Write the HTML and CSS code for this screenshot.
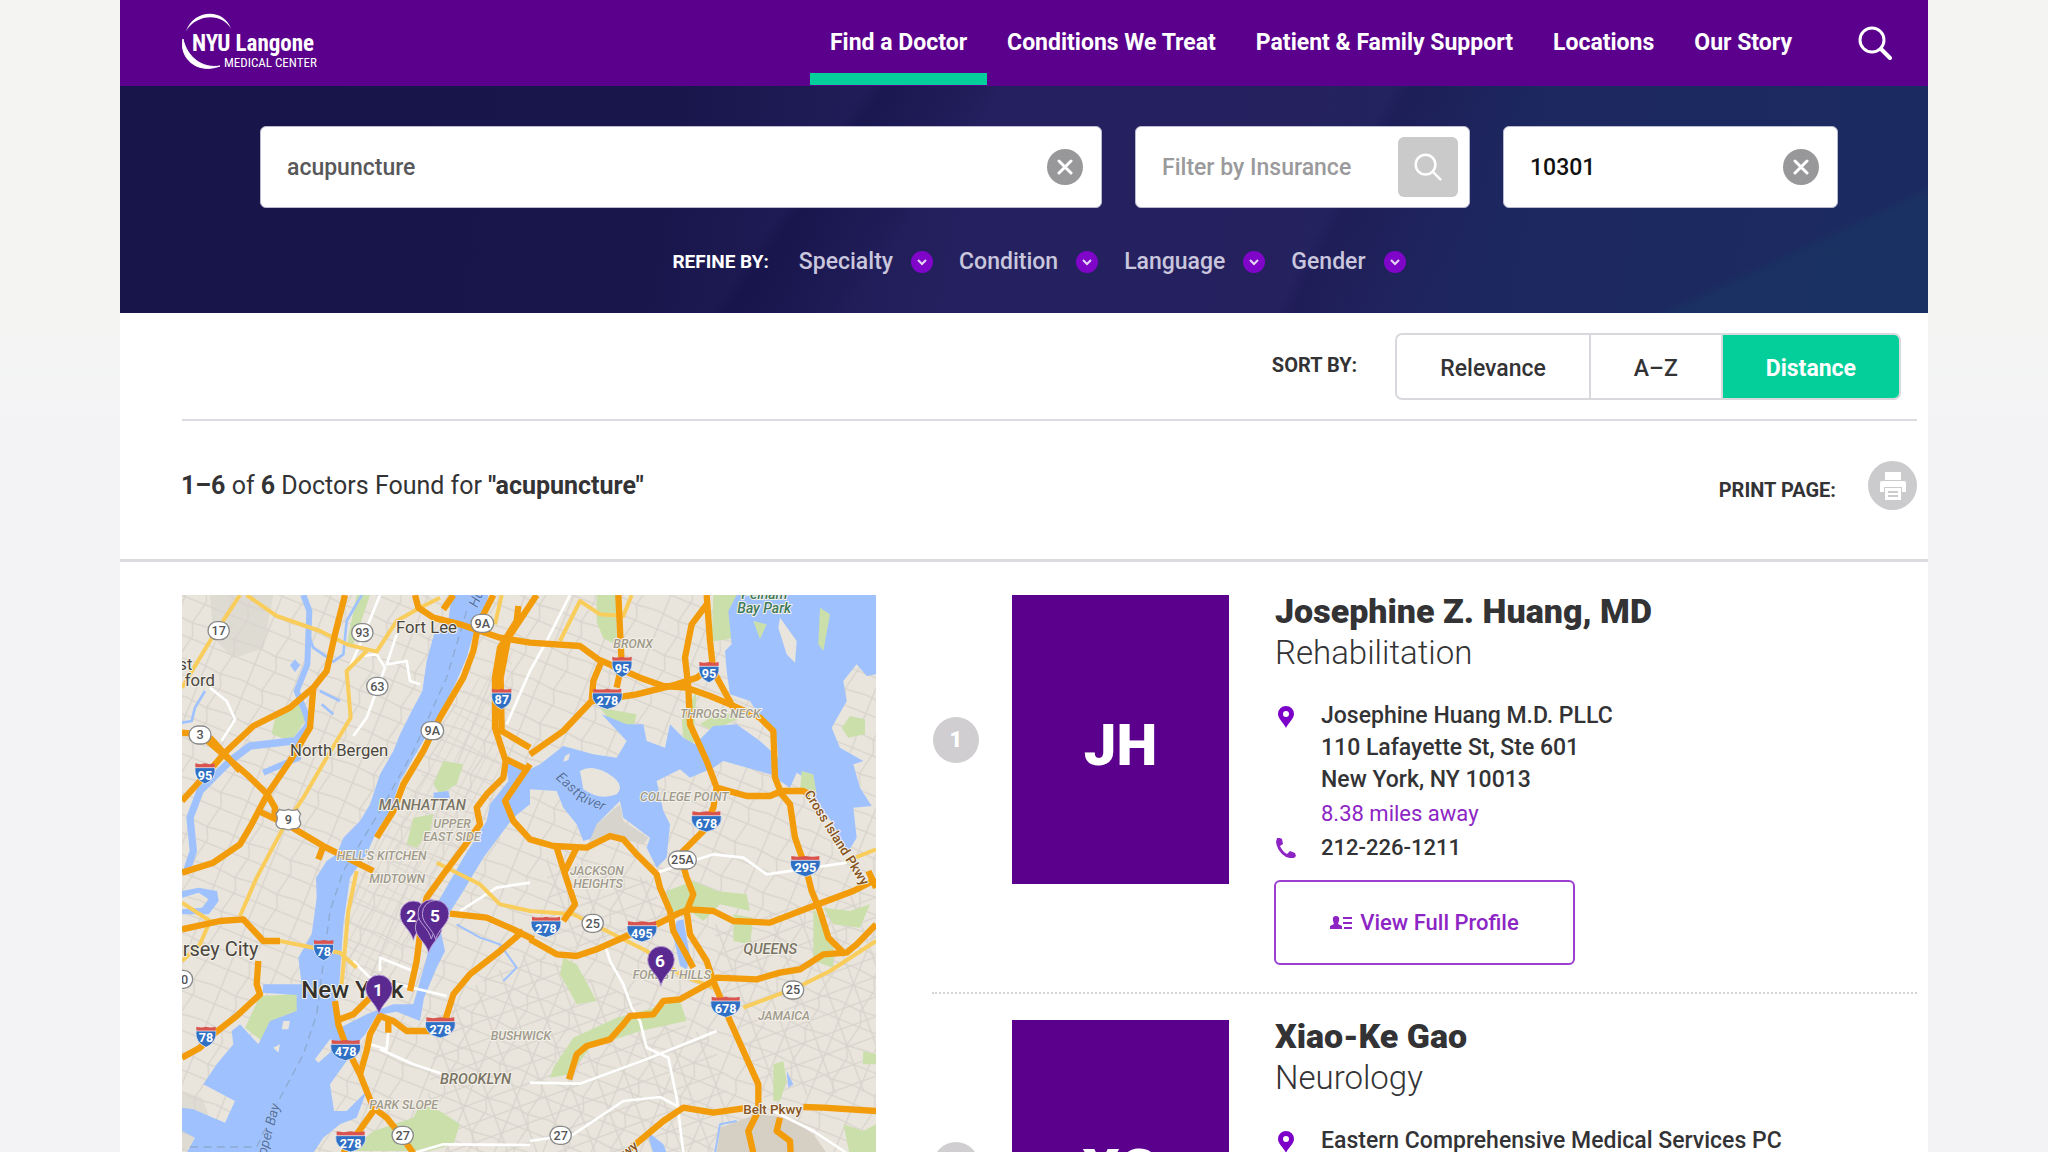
FILE: index.html
```html
<!DOCTYPE html>
<html lang="en">
<head>
<meta charset="utf-8">
<title>Find a Doctor | NYU Langone Medical Center</title>
<link rel="stylesheet" href="styles.css">
</head>
<body>
<div class="page">
  <header class="site-header">
    <a class="logo" href="#" aria-label="NYU Langone Medical Center">
      <svg viewBox="0 0 140 60" width="140" height="60" aria-hidden="true">
        <path d="M4 18C12-4 42-5 49 16C41 0 15 0 4 18Z" fill="#fff"/>
        <path d="M1 26C-3 44 14 62 38 53C20 56 5 44 1 26Z" fill="#fff" stroke="#fff"/>
        <text class="logo-name" x="10" y="38">NYU Langone</text>
        <text class="logo-sub" x="42" y="54">MEDICAL CENTER</text>
      </svg>
    </a>
    <nav class="main-nav">
      <a class="nav-link active" href="#">Find a Doctor</a>
      <a class="nav-link" href="#">Conditions We Treat</a>
      <a class="nav-link" href="#">Patient &amp; Family Support</a>
      <a class="nav-link" href="#">Locations</a>
      <a class="nav-link" href="#">Our Story</a>
    </nav>
    <button class="header-search" type="button" aria-label="Search">
      <svg viewBox="0 0 34 34" width="34" height="34" fill="none" stroke="#fff" stroke-width="3" stroke-linecap="round"><circle cx="14" cy="14" r="12"/><path d="M23 23l9 9" stroke-width="4"/></svg>
    </button>
  </header>

  <form class="search-band">
    <div class="fields">
      <div class="field">
        <input class="field-input" type="text" value="acupuncture" aria-label="Search doctors">
        <button class="clear" type="button" aria-label="Clear search"><svg viewBox="0 0 16 16" width="16" height="16"><path d="M2 2l12 12M14 2L2 14" stroke="#fff" stroke-width="3" stroke-linecap="round"/></svg></button>
      </div>
      <div class="field field-insurance">
        <input class="field-input" type="text" placeholder="Filter by Insurance" aria-label="Filter by Insurance">
        <button class="field-search" type="button" aria-label="Search insurance"><svg viewBox="0 0 34 34" width="28" height="28" fill="none" stroke="#fff" stroke-width="3" stroke-linecap="round"><circle cx="14" cy="14" r="12"/><path d="M23 23l9 9"/></svg></button>
      </div>
      <div class="field">
        <input class="field-input zip" type="text" value="10301" aria-label="ZIP code">
        <button class="clear" type="button" aria-label="Clear ZIP code"><svg viewBox="0 0 16 16" width="16" height="16"><path d="M2 2l12 12M14 2L2 14" stroke="#fff" stroke-width="3" stroke-linecap="round"/></svg></button>
      </div>
    </div>
    <div class="refine">
      <span class="refine-label">REFINE BY:</span>
      <button class="refine-btn" type="button">Specialty<span class="dot"><svg viewBox="0 0 10 7" width="10" height="7"><path d="M1 1l4 4 4-4" fill="none" stroke="#e5d9f5" stroke-width="2"/></svg></span></button>
      <button class="refine-btn" type="button">Condition<span class="dot"><svg viewBox="0 0 10 7" width="10" height="7"><path d="M1 1l4 4 4-4" fill="none" stroke="#e5d9f5" stroke-width="2"/></svg></span></button>
      <button class="refine-btn" type="button">Language<span class="dot"><svg viewBox="0 0 10 7" width="10" height="7"><path d="M1 1l4 4 4-4" fill="none" stroke="#e5d9f5" stroke-width="2"/></svg></span></button>
      <button class="refine-btn" type="button">Gender<span class="dot"><svg viewBox="0 0 10 7" width="10" height="7"><path d="M1 1l4 4 4-4" fill="none" stroke="#e5d9f5" stroke-width="2"/></svg></span></button>
    </div>
  </form>

  <div class="sort-row">
    <span class="caps-label sort-label">SORT BY:</span>
    <div class="segments">
      <button class="segment" type="button">Relevance</button>
      <button class="segment" type="button">A–Z</button>
      <button class="segment selected" type="button">Distance</button>
    </div>
  </div>

  <div class="summary">
    <p class="count"><b>1–6</b> of <b>6</b> Doctors Found for <b>"acupuncture"</b></p>
    <span class="caps-label print-label">PRINT PAGE:</span>
    <button class="print" type="button" aria-label="Print page">
      <svg viewBox="0 0 26 28" width="26" height="28"><path fill="#fff" d="M5 0h16v8H5zM2 9h22q2 0 2 2v9h-4v-5H4v5H0v-9q0-2 2-2zM5 16h16v12H5z"/><path d="M8 20h10M8 24h10" stroke="#cbcbcd" stroke-width="2"/></svg>
    </button>
  </div>

  <main class="results">
    <svg class="map" viewBox="6 12 2082 1674" preserveAspectRatio="xMinYMin slice" role="img" aria-label="Map of doctors">
      <defs>
        <pattern id="streets" width="135" height="110" patternUnits="userSpaceOnUse" patternTransform="rotate(22)"><path d="M0 10H135M0 68L70 75L135 68M20 0V110M86 0L70 75L86 110" stroke="#d8d4cd" stroke-width="4" fill="none"/></pattern>
        <pattern id="blocks" width="26" height="70" patternUnits="userSpaceOnUse" patternTransform="rotate(28)"><path d="M0 5H26M5 0V70" stroke="#dad6cf" stroke-width="3"/></pattern>
        <pattern id="avenues" width="82" height="56" patternUnits="userSpaceOnUse" patternTransform="rotate(-20)"><path d="M0 10H82M20 0V56" stroke="#d8d4cd" stroke-width="4"/></pattern>
        <symbol id="i2" viewBox="0 0 64 66"><path d="M3 3q14 5 29 0q15 5 29 0v14H3z" fill="#d9534f"/><path d="M2 16H62Q66 50 32 65Q-2 50 2 16Z" fill="#2f6fc4" stroke="#fff" stroke-width="2"/></symbol>
        <symbol id="i3" viewBox="0 0 96 66"><path d="M6 3q21 5 42 0q21 5 42 0v14H6z" fill="#d9534f"/><path d="M3 16H93Q97 54 48 65Q-1 54 3 16Z" fill="#2f6fc4" stroke="#fff" stroke-width="2"/></symbol>
        <symbol id="pin" viewBox="0 0 84 122"><path d="M42 120C34 86 2 74 2 42A40 40 0 0 1 82 42C82 74 50 86 42 120Z" fill="#5b2a91" stroke="#b9a3d3" stroke-width="3"/></symbol>
      </defs>
      <rect x="6" y="12" width="2082" height="1674" fill="#e9e5dc"/>
      <g fill="#dedbd3">
        <path d="M90 12h190l-30 160-90 30-60-60z"/><path d="M6 1500l60 20 60 160H6z"/>
      </g>
      <rect x="6" y="12" width="2082" height="1674" fill="url(#streets)"/>
      <path d="M850 300L1000 180L960 560L880 700L740 1000L560 1200L480 1180L520 880L700 600Z" fill="url(#blocks)"/>
      <path d="M780 1250L1050 1080L1420 1250L1600 1350L1690 1686H720Z" fill="url(#avenues)"/>
      <path d="M1100 800L1400 860L1480 1000L1300 1040L1110 1090ZM1600 1000L2088 900V1500L1750 1520L1630 1200Z" fill="url(#avenues)"/>
      <path d="M1620 1610L1730 1570L1830 1580L1900 1630L1940 1686H1610Z" fill="#d6cfc4"/>
      <g fill="#cbdfab">
        <path d="M530 12h40l-50 150h-20zM365 330l10 60-40 60-60-20 10-50zM790 510l60 10-20 60-50 30-20-30zM700 680l60-10-10 50-40 50-30-10zM240 1215l110-5 5 50-90 40-20 50-50-40z"/>
        <path d="M1250 12h60v150l-40-20-20-50zM1600 12h70l-15 130-60 10zM1260 350l110 20-10 40-70-20zM1550 300l-10 160-30-20-5-60zM1560 400l60-40 60 20-80 40z"/>
        <path d="M1460 900l80-30 70 30 90 10 10 50-90-20-50 50-40-30-60 20zM1660 970l60 10-10 80-50-10zM1930 950l80 10 60-20-30 70-80-10zM1900 950l60 100 0 80-60-20zM1150 1100l40 20 60 110-60 10-50-90zM1120 1430l60-90 130-60 190-50 20 60-140 30-150 50-60 80-60 10z"/>
        <path d="M580 1620l120-40 20-40 60 20 60 40-20 60-70 20h-240zM2050 1380l38 10v30h-40zM1990 1600l60 20 38-20v86h-80zM1780 1420l30-10 10 60-20 60h-20z"/>
      </g>
      <g fill="#9fc2ff">
        <path d="M815 12L805 90L762 130L740 210L727 300L690 370L660 430L640 480L600 550L570 640L540 690L490 740L470 790L440 810L408 860L410 920L395 1030L355 1100L365 1180L250 1180L248 1205L350 1212L350 1260L270 1290L235 1360L180 1300L155 1320L160 1360L110 1420L70 1480L165 1530L135 1595L40 1555L6 1550V1620L45 1640L20 1686H400L430 1640L480 1600L530 1580L560 1500L500 1560L462 1560L450 1480L500 1410L455 1380L415 1415L405 1405L450 1345L520 1370L556 1330L590 1272L650 1262L720 1290L732 1220L770 1130L795 1080L780 1010L850 900L910 800L1000 680L1050 640L1050 595L1130 600L1150 650L1190 700L1210 750L1240 740L1250 700L1320 630L1330 680L1410 740L1400 770L1430 830L1460 800L1470 700L1450 660L1430 570L1500 535L1530 560L1600 530L1630 510L1770 550L1830 590L1850 545L1900 575L1905 620L1960 700L2000 790L2030 740L2020 650L2075 645L2040 590L2020 520L2050 510L1980 470L1955 410L2000 330L1990 270L2030 220L2060 255L2088 250V12H1670L1645 60L1655 160L1635 180L1640 240L1650 310L1710 330L1745 385L1790 450L1795 500L1740 450L1670 400L1600 405L1545 460L1510 440L1470 400L1455 470L1400 450L1390 400L1340 400L1265 370L1340 450L1310 500L1240 490L1150 465L1080 520L1040 540L975 500L985 570L930 640L920 690L850 800L770 940L740 1100L700 1240L640 1240L560 1270L480 1310L465 1240L478 1180L490 1000L510 860L560 790L590 720L630 660L660 570L730 450L790 350L830 270L860 200L880 130L915 60L925 12Z"/>
        <path d="M6 900l50-10 55 10 5 30-30 40H6v-15l60-5 20-25-30-20-50 15zM345 205l15 18-15 20-15-20zM760 605l45-5 5 20-48 5zM1490 990l20-5 20 110-10 40-20-10-20-90zM1820 1440l20 40-15 10zM1400 1620l50 40 10 26h-40z"/>
      </g>
      <path d="M1720 90l40 10-20 45zM1920 50l30 20-20 110-15-20zM1865 540l35 10 10 60-50-10zM2010 375l45 10v45l-50 10-20-30z" fill="#cbdfab"/>
      <g fill="none" stroke="#9fc2ff" stroke-linejoin="round">
        <path d="M370 12L388 60L382 220L350 300L378 370L385 400L340 455L355 500L250 545" stroke-width="18"/>
        <path d="M340 450L210 465L150 510L60 600L30 680L40 780L20 840" stroke-width="22"/>
        <path d="M545 12L500 90L490 190L460 212L400 170L385 130M75 300L45 350L35 390L6 395M425 340L460 370M420 300L480 330" stroke-width="8"/>
        <path d="M830 1000L900 1040L960 1060L1010 1130L970 1170M1670 1590L1620 1600L1605 1686" stroke-width="6"/>
      </g>
      <g fill="#e9e5dc">
        <path d="M1200 540Q1230 520 1280 545Q1340 580 1310 610Q1260 630 1210 595ZM1155 495l15-8-5 20-15 5zM1800 80L1850 150L1845 215L1820 190L1795 110ZM310 1290l20 0-5 25-20 0zM280 1370l20-10-5 25z"/>
      </g>
      <path d="M1250 700L1320 640L1330 690L1405 740L1390 760L1290 735L1220 770Z" fill="#d7d4cd"/>
      <g fill="none" stroke="#8ea9cf" stroke-width="4" stroke-dasharray="24 16">
        <path d="M860 60L800 260L700 480L600 660L490 840L450 960L410 1270L370 1390L290 1540L230 1668L20 1668"/>
      </g>
      <g fill="none" stroke="#fff" stroke-width="8" stroke-linejoin="round">
        <path d="M1170 12L1100 150L1050 240L980 400M600 12L540 160L500 250M650 130L620 220L680 210L690 270L720 280M540 195L590 190L615 230L560 380L520 435M90 290L140 330L165 385L125 450"/>
        <path d="M840 960L950 890L1050 875M600 1140L600 1100L700 1140M520 1110L570 1160L800 1215M625 1320L620 1375L570 1360M600 1375L700 1420L790 1450M1275 1060L1290 1110L1330 1180L1355 1250L1380 1290L1400 1370L1465 1400L1490 1520L1510 1686M1050 1475L1200 1478L1400 1405L1610 1320M1050 1650L1180 1630L1330 1530L1440 1518L1500 1550M1780 1560L1900 1620L2000 1686M700 1686L790 1660L1050 1662M1430 845L1600 790L1690 800L1760 850L1900 830L2000 815"/>
      </g>
      <g fill="none" stroke="#f9cd5c" stroke-width="12" stroke-linejoin="round">
        <path d="M180 12L90 150L6 290M200 12L290 75L420 120L500 160L590 182L650 90L720 50L780 20M560 180L500 240L512 380L440 500L370 620L310 710L230 860L180 975M530 840L505 960L485 1180M300 1050L400 1070L480 1085L530 1130M6 935L90 990L60 1060L6 1110"/>
        <path d="M770 815L900 880L960 940L1050 960L1180 970L1300 1030L1400 1080L1500 1150L1600 1190M1690 1250L1850 1190L1950 1140L2088 1050M1140 150L1200 30L1260 70L1330 75L1355 12M965 12L945 100M2000 810L2088 775"/>
      </g>
      <g fill="none" stroke="#f29c0b" stroke-width="19" stroke-linejoin="round">
        <path d="M495 12L465 130L440 240L400 290L330 350L220 405L140 480L60 570L6 630M400 290L390 410L330 510L262 610L215 700L180 760L100 815L6 845M6 425L60 430L130 490L200 550L262 610L285 650L282 690M90 440L180 540M235 660L320 700L430 765L480 790L580 840M430 765L415 805"/>
        <path d="M705 12L715 50L760 80L840 100L960 140L1050 155L1200 165L1255 205L1300 225L1380 260L1450 285L1520 290L1590 315L1650 340L1740 380L1780 420L1785 560L1805 610L1830 640L1845 740L1880 840L1895 900L1920 960L1945 1040L1995 1090M820 12L790 55M940 12L895 100L880 180L850 260L780 380L730 480L670 580L640 660L590 740"/>
        <path d="M1015 45L1010 90L960 170L945 260L945 410L977 510L970 560L920 610L890 650L900 700L850 770L790 850L740 920L725 990L710 1110L690 1200M1070 12L985 140L962 260L965 420L1050 470M980 505L1040 535M1050 520L975 630L1000 690L1050 745L1120 765L1220 770L1290 735L1330 745L1370 790L1430 850L1440 890L1470 960L1480 1020L1540 1130"/>
        <path d="M1050 490L1150 420L1235 330L1240 270L1265 210M1315 12L1325 220L1310 290M1240 330L1370 310L1490 280L1550 260L1590 230M1580 12L1590 150L1600 240L1660 350M1580 40L1535 100L1515 200L1525 290L1530 400L1580 510L1610 590L1600 650L1570 720L1500 790L1520 860L1540 910L1520 960L1530 1030L1580 1110L1600 1170L1650 1290L1735 1480L1735 1560L1705 1620L1720 1686M1610 590L1700 615L1770 615L1805 600L1870 600L1890 610"/>
        <path d="M1050 1045L1130 1090L1190 1095L1250 1075L1340 1035L1430 1000L1500 965L1530 955L1600 960L1660 990L1770 995L1900 945L2020 900L2088 865M2065 840L2088 890M1130 770L1155 850L1185 940L1150 990M1190 770L1155 840M810 968L920 980L1000 1015L1060 1045M1030 1020L960 1080L870 1150L820 1210L795 1290M750 1320L680 1320L640 1290L600 1275L570 1330L560 1380L540 1450M625 1290V1325"/>
        <path d="M465 1230L475 1300L500 1370L540 1450L580 1550L620 1580L660 1630L700 1686M580 1560L530 1630L490 1686M480 1285L520 1270L570 1220M1167 1465L1190 1390L1220 1365L1290 1345L1330 1300L1350 1275L1420 1270L1450 1230L1500 1225L1590 1175L1610 1160L1730 1165L1800 1145L1860 1135L1930 1090L2000 1085L2030 1060L2088 1000M1330 1690L1450 1590L1510 1550L1600 1565L1690 1552M1870 1548L1930 1550L2088 1560M1800 1580L1790 1620L1830 1650L1832 1686M6 1015L120 990L190 985L250 1050L300 1050M235 1110L230 1180L240 1210L170 1275L100 1330L60 1370L6 1400"/>
      </g>

      <g class="map-area">
        <text x="1684" y="24" class="park">Pelham</text><text x="1672" y="66" class="park">Bay Park</text>
        <text x="1300" y="171">BRONX</text><text x="1500" y="380">THROGS NECK</text><text x="1380" y="630">COLLEGE POINT</text>
        <text x="760" y="710">UPPER</text><text x="730" y="750">EAST SIDE</text><text x="470" y="808">HELL'S KITCHEN</text><text x="568" y="876">MIDTOWN</text>
        <text x="1170" y="852">JACKSON</text><text x="1180" y="890">HEIGHTS</text><text x="1358" y="1164">FOREST HILLS</text><text x="1734" y="1286">JAMAICA</text>
        <text x="932" y="1348">BUSHWICK</text><text x="568" y="1554">PARK SLOPE</text>
      </g>
      <g class="map-borough"><text x="596" y="658">MANHATTAN</text><text x="1690" y="1088">QUEENS</text><text x="780" y="1480">BROOKLYN</text></g>
      <g class="map-town">
        <text x="648" y="127">Fort Lee</text><text x="330" y="495">North Bergen</text><text x="-5" y="236">st</text><text x="14" y="285">ford</text><text x="8" y="1096" class="large">rsey City</text>
        <text x="364" y="1220" class="city">New York</text>
      </g>
      <g class="map-water"><text transform="translate(892 52) rotate(-68)">Hu</text><text transform="translate(1126 562) rotate(42)">East</text><text transform="translate(1186 626) rotate(22)">River</text><text transform="translate(252 1720) rotate(-75)">Upper Bay</text></g>
      <g class="map-road"><text x="1690" y="1570">Belt Pkwy</text><text transform="translate(1872 608) rotate(58)">Cross Island Pkwy</text><text transform="translate(1338 1700) rotate(-38)">wy</text></g>

      <g class="route">
        <rect x="84" y="92" width="64" height="54" rx="27"/><text x="116" y="132">17</text>
        <rect x="515" y="98" width="64" height="54" rx="27"/><text x="547" y="138">93</text>
        <rect x="560" y="259" width="64" height="54" rx="27"/><text x="592" y="299">63</text>
        <rect x="873" y="70" width="68" height="54" rx="27"/><text x="907" y="110">9A</text>
        <rect x="723" y="392" width="68" height="54" rx="27"/><text x="757" y="432">9A</text>
        <rect x="27" y="405" width="66" height="54" rx="27"/><text x="60" y="445">3</text>
        <path d="M298 655q14 6 27 0q13 6 27 0l10 14q-8 12 0 26q0 12-12 17q-15 0-25 5q-10-5-25-5q-12-5-12-17q8-14 0-26z"/><text x="325" y="698">9</text>
        <rect x="1465" y="780" width="84" height="54" rx="27"/><text x="1507" y="820">25A</text>
        <rect x="1206" y="970" width="64" height="54" rx="27"/><text x="1238" y="1010">25</text>
        <rect x="1807" y="1170" width="64" height="54" rx="27"/><text x="1839" y="1210">25</text>
        <rect x="1110" y="1606" width="64" height="54" rx="27"/><text x="1142" y="1646">27</text>
        <rect x="636" y="1606" width="64" height="54" rx="27"/><text x="668" y="1646">27</text>
        <rect x="-30" y="1138" width="68" height="54" rx="27"/><text x="14" y="1178">0</text>
      </g>
      <g class="interstate">
        <use href="#i2" x="43" y="514" width="64" height="66"/><text x="75" y="566">95</text>
        <use href="#i2" x="933" y="290" width="64" height="66"/><text x="965" y="340">87</text>
        <use href="#i2" x="1294" y="194" width="64" height="66"/><text x="1326" y="245">95</text>
        <use href="#i2" x="1555" y="210" width="64" height="66"/><text x="1587" y="262">95</text>
        <use href="#i2" x="399" y="1044" width="64" height="66"/><text x="431" y="1094">78</text>
        <use href="#i2" x="46" y="1304" width="64" height="66"/><text x="78" y="1354">78</text>
        <use href="#i3" x="1234" y="290" width="96" height="66"/><text x="1282" y="342">278</text>
        <use href="#i3" x="1531" y="658" width="96" height="66"/><text x="1579" y="710">678</text>
        <use href="#i3" x="1828" y="792" width="96" height="66"/><text x="1876" y="844">295</text>
        <use href="#i3" x="1050" y="974" width="96" height="66"/><text x="1098" y="1026">278</text>
        <use href="#i3" x="1338" y="988" width="96" height="66"/><text x="1386" y="1040">495</text>
        <use href="#i3" x="1589" y="1214" width="96" height="66"/><text x="1637" y="1266">678</text>
        <use href="#i3" x="733" y="1276" width="96" height="66"/><text x="781" y="1328">278</text>
        <use href="#i3" x="449" y="1344" width="96" height="66"/><text x="497" y="1396">478</text>
        <use href="#i3" x="464" y="1618" width="96" height="66"/><text x="512" y="1670">278</text>
      </g>
      <g class="pins">
        <use href="#pin" x="555" y="1150" width="84" height="122"/><text x="594" y="1214">1</text>
        <use href="#pin" x="658" y="928" width="84" height="122"/><text x="694" y="992">2</text>
        <use href="#pin" x="704" y="966" width="84" height="122"/>
        <use href="#pin" x="712" y="924" width="84" height="122"/>
        <use href="#pin" x="725" y="922" width="84" height="130"/><text x="765" y="992">5</text>
        <use href="#pin" x="1401" y="1064" width="84" height="122"/><text x="1440" y="1129">6</text>
      </g>
    </svg>

    <div class="doctors">
      <article class="doctor">
        <span class="rank">1</span>
        <div class="initials">JH</div>
        <div class="info">
          <h2 class="name">Josephine Z. Huang, MD</h2>
          <p class="specialty">Rehabilitation</p>
          <div class="contact">
            <svg class="contact-icon" viewBox="0 0 16 22" width="16" height="22"><path fill="#7d00c8" fill-rule="evenodd" d="M8 0a8 8 0 0 1 8 8c0 5-6 9-8 14C6 17 0 13 0 8a8 8 0 0 1 8-8zm0 5a3 3 0 1 0 0 6 3 3 0 0 0 0-6z"/></svg>
            <address class="address">Josephine Huang M.D. PLLC<br>110 Lafayette St, Ste 601<br>New York, NY 10013</address>
          </div>
          <p class="away">8.38 miles away</p>
          <div class="contact">
            <svg class="contact-icon" viewBox="0 0 20 20" width="20" height="20"><path fill="#8d25c5" d="M1 0h3l2 1 1 5-3 2q2 5 7 8l3-3 5 2 1 3-2 2q-7 1-12-4T0 4z"/></svg>
            <span>212-226-1211</span>
          </div>
          <a class="profile" href="#"><svg viewBox="0 0 22 14" width="22" height="14"><path fill="#8d25c5" d="M6 0q4 0 3 5l-1 3 4 2v3H0v-3l4-2-1-3Q2 0 6 0zM13 1h9v2h-9zM13 6h9v2h-9zM14 11h8v2h-8z"/></svg>View Full Profile</a>
        </div>
      </article>
      <article class="doctor">
        <span class="rank">2</span>
        <div class="initials">XG</div>
        <div class="info">
          <h2 class="name">Xiao-Ke Gao</h2>
          <p class="specialty">Neurology</p>
          <div class="contact">
            <svg class="contact-icon" viewBox="0 0 16 22" width="16" height="22"><path fill="#7d00c8" fill-rule="evenodd" d="M8 0a8 8 0 0 1 8 8c0 5-6 9-8 14C6 17 0 13 0 8a8 8 0 0 1 8-8zm0 5a3 3 0 1 0 0 6 3 3 0 0 0 0-6z"/></svg>
            <address class="address">Eastern Comprehensive Medical Services PC</address>
          </div>
        </div>
      </article>
    </div>
  </main>
</div>
</body>
</html>
```
FILE: styles.css
```css
* { box-sizing: border-box; }

body {
  margin: 0;
  padding: 0 120px;
  background: linear-gradient(#f4f5f3 314px, #f3f3f5 420px);
  color: #333335;
  font: 500 22px/32px Roboto, "Liberation Sans", sans-serif;
}

button, input { font: inherit; color: inherit; border: 0; padding: 0; }
button { background: none; cursor: pointer; }
a { color: inherit; text-decoration: none; }
p, h2 { margin: 0; }

.page { height: 100vh; overflow: hidden; background: #fff; }

/* Header */
.site-header {
  display: flex;
  align-items: center;
  height: 86px;
  padding: 0 36px 0 62px;
  background: #5a008c;
  color: #fff;
}
.logo { flex: 1; height: 60px; }
.logo svg { display: block; }
.logo-name { font: 700 23px "Roboto Condensed", "Liberation Sans Narrow", Roboto, sans-serif; fill: #fff; }
.logo-sub { font: 400 13px "Roboto Condensed", "Liberation Sans Narrow", Roboto, sans-serif; fill: #fff; }
.main-nav { display: flex; align-self: stretch; }
.nav-link {
  height: 85px;
  padding: 27px 20px 0;
  border-bottom: 12px solid transparent;
  font-size: 23px;
  font-weight: 700;
}
.nav-link.active { border-color: #04cf9a; }
.header-search { display: flex; margin-left: 46px; }

/* Search */
.search-band {
  height: 227px;
  padding: 40px 90px 0 140px;
  background:
    linear-gradient(155deg, transparent 88%, rgba(20, 75, 105, .2) 89%),
    linear-gradient(125deg, transparent 38%, rgba(12, 10, 60, .3) 39%, rgba(12, 10, 60, .1) 44%, transparent 45%),
    linear-gradient(118deg, transparent 66%, rgba(12, 10, 60, .2) 67%, transparent 74%),
    linear-gradient(100deg, #18154a 0%, #19164c 30%, #252160 48%, #25215f 64%, #1c285f 78%, #1b2b61 100%);
}
.fields { display: grid; grid-template-columns: 1fr 335px 335px; gap: 33px; }
.field {
  display: flex;
  align-items: center;
  height: 82px;
  padding: 0 18px 0 26px;
  border: 1px solid #b9b9cf;
  border-radius: 6px;
  background: #fff;
  color: #58585a;
  font-size: 23px;
}
.field-insurance { padding-right: 11px; }
.field-input { flex: 1; min-width: 0; height: 60px; background: none; outline: none; }
.field-input.zip { color: #111; }
.field-input::placeholder { color: #9a9a9c; opacity: 1; }
.clear {
  display: grid;
  place-items: center;
  width: 36px;
  height: 36px;
  border-radius: 50%;
  background: #98989a;
}
.field-search {
  display: grid;
  place-items: center;
  width: 60px;
  height: 60px;
  border-radius: 6px;
  background: #cacaca;
}
.refine {
  display: flex;
  align-items: center;
  justify-content: center;
  gap: 26px;
  padding: 38px 20px 0 0;
  color: #c9c6dd;
  font-size: 23px;
}
.refine-label { margin-right: 4px; color: #fff; font-size: 19px; font-weight: 700; }
.refine-btn { display: flex; align-items: center; gap: 18px; }
.dot {
  display: grid;
  place-items: center;
  width: 22px;
  height: 22px;
  border-radius: 50%;
  background: #7f05c9;
}

/* Sorting */
.caps-label { font-size: 20px; font-weight: 700; }
.sort-row {
  display: flex;
  justify-content: flex-end;
  margin: 0 11px 0 62px;
  padding: 20px 16px 19px 0;
  border-bottom: 2px solid #dcdce0;
}
.sort-label { margin: 16px 38px 0 0; }
.segments {
  display: flex;
  height: 67px;
  border: 2px solid #d9d9dd;
  border-radius: 7px;
  overflow: hidden;
}
.segment { padding: 4px 43px 0; border-right: 2px solid #d9d9dd; font-size: 23px; }
.segment:last-child { border-right: 0; }
.segment.selected { background: #04cf9a; color: #fff; font-weight: 700; }

/* Result summary */
.summary {
  display: flex;
  align-items: center;
  height: 141px;
  padding: 0 11px 9px 61px;
  border-bottom: 3px solid #dcdce0;
}
.count { flex: 1; font-size: 25px; font-weight: 400; }
.print-label { margin: 8px 32px 0 0; }
.print {
  display: grid;
  place-items: center;
  width: 49px;
  height: 49px;
  border-radius: 50%;
  background: #cbcbcd;
}

/* Map and doctors */
.results {
  display: grid;
  grid-template-columns: 694px 1fr;
  gap: 56px;
  padding: 33px 11px 0 62px;
}
.map { display: block; width: 100%; }
.map text { font-family: Roboto, sans-serif; }
.map-area text, .map-borough text, .map-town text, .map-water text, .map-road text {
  paint-order: stroke;
  stroke: #f3f1ea;
  stroke-width: 6px;
  stroke-linejoin: round;
}
.map-area text { font-size: 37px; font-style: italic; font-weight: 500; fill: #a09a8c; }
.map-area .park { font-size: 42px; fill: #3f7a5b; }
.map-borough text { font-size: 44px; font-style: italic; font-weight: 500; fill: #7a7464; }
.map-town text { font-size: 50px; font-weight: 400; fill: #4a463e; }
.map-town .large { font-size: 60px; }
.map-town .city { font-size: 72px; font-weight: 500; fill: #35322c; }
.map-water text { font-size: 42px; font-style: italic; font-weight: 400; fill: #56739f; stroke: #b3cfff; stroke-width: 3px; }
.map-road text { font-size: 40px; font-weight: 500; fill: #865321; }
.route rect, .route path { fill: #fff; stroke: #8a8a8a; stroke-width: 4px; }
.route text { font-size: 38px; font-weight: 500; fill: #555; text-anchor: middle; }
.interstate text { font-size: 38px; font-weight: 700; fill: #fff; text-anchor: middle; }
.pins text { font-size: 52px; font-weight: 700; fill: #fff; text-anchor: middle; }

.doctor {
  display: grid;
  grid-template-columns: 80px 217px 1fr;
  height: 399px;
  margin-bottom: 26px;
  border-bottom: 2px dotted #d3d3d6;
}
.rank {
  width: 46px;
  height: 46px;
  margin: 122px 0 0 1px;
  border-radius: 50%;
  background: #d0ced1;
  color: #fff;
  font-weight: 900;
  line-height: 46px;
  text-align: center;
}
.initials {
  height: 289px;
  background: #5a008c;
  color: #fff;
  font-size: 58px;
  font-weight: 900;
  line-height: 300px;
  text-align: center;
}
.info { padding-left: 46px; }
.name { font-size: 34px; font-weight: 900; line-height: 32px; }
.specialty { margin-top: 6px; font-size: 33px; font-weight: 300; line-height: 40px; }
.contact { display: flex; align-items: flex-start; margin-top: 27px; }
.contact-icon { flex: none; margin: 6px 4px 0 3px; }
.contact-icon + * { margin-left: 23px; }
.address { font-size: 23px; font-style: normal; }
.away { padding: 2px 0 2px 46px; color: #8d25c5; font-weight: 400; }
.away + .contact { margin-top: 0; }
.away + .contact .contact-icon { margin: 6px 2px 0 1px; }
.profile {
  display: flex;
  align-items: center;
  justify-content: center;
  gap: 8px;
  width: 301px;
  height: 85px;
  margin: 16px 0 0 -1px;
  border: 2px solid #9b3fd0;
  border-radius: 6px;
  color: #8d25c5;
}
```
